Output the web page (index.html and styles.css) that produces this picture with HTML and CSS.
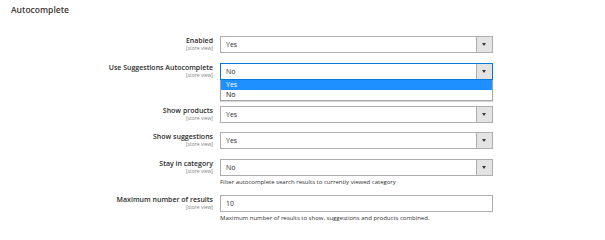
FILE: index.html
```html
<!DOCTYPE html>
<html>
<head>
<meta charset="utf-8">
<link rel="stylesheet" href="styles.css">
</head>
<body>
<div class="page">
  <h2 class="section-title">Autocomplete</h2>
  <div class="form">
    <div class="row">
      <div class="label"><span class="name">Enabled</span><span class="scope">[store view]</span></div>
      <div class="control">
        <div class="select"><span class="value">Yes</span><span class="arrow"></span></div>
      </div>
    </div>
    <div class="row row-open">
      <div class="label"><span class="name">Use Suggestions Autocomplete</span><span class="scope">[store view]</span></div>
      <div class="control">
        <div class="select focused"><span class="value">No</span><span class="arrow"></span></div>
        <ul class="options">
          <li class="option selected">Yes</li>
          <li class="option">No</li>
        </ul>
      </div>
    </div>
    <div class="row">
      <div class="label"><span class="name">Show products</span><span class="scope">[store view]</span></div>
      <div class="control">
        <div class="select"><span class="value">Yes</span><span class="arrow"></span></div>
      </div>
    </div>
    <div class="row">
      <div class="label"><span class="name">Show suggestions</span><span class="scope">[store view]</span></div>
      <div class="control">
        <div class="select"><span class="value">Yes</span><span class="arrow"></span></div>
      </div>
    </div>
    <div class="row">
      <div class="label"><span class="name">Stay in category</span><span class="scope">[store view]</span></div>
      <div class="control">
        <div class="select"><span class="value">No</span><span class="arrow"></span></div>
        <p class="note">Filter autocomplete search results to currently viewed category</p>
      </div>
    </div>
    <div class="row">
      <div class="label"><span class="name">Maximum number of results</span><span class="scope">[store view]</span></div>
      <div class="control">
        <div class="input"><span class="value">10</span></div>
        <p class="note">Maximum number of results to show, suggestions and products combined.</p>
      </div>
    </div>
  </div>
</div>
</body>
</html>
```

FILE: styles.css
```css
html, body {
  margin: 0;
  padding: 0;
  background: #ffffff;
}

body {
  font-family: "Open Sans", "Liberation Sans", sans-serif;
  color: #303030;
}

.page {
  padding: 4px 11px 0 11px;
}

.section-title {
  margin: 0;
  font-size: 8.5px;
  line-height: 12px;
  font-weight: 600;
  color: #41362f;
}

.form {
  margin-top: 20px;
}

.row {
  display: grid;
  grid-template-columns: 202px 273px;
  column-gap: 7px;
  margin-bottom: 9.5px;
}

.row-open {
  margin-bottom: 5px;
}

.label {
  display: flex;
  flex-direction: column;
  align-items: flex-end;
  text-align: right;
}

.name {
  font-size: 7px;
  line-height: 9px;
  font-weight: 600;
  color: #2b2b2b;
}

.scope {
  font-size: 5px;
  line-height: 6px;
  color: #808080;
}

.control {
  display: flex;
  flex-direction: column;
}

.select,
.input {
  box-sizing: border-box;
  height: 17px;
  border: 1px solid #adadad;
  background: #ffffff;
  display: flex;
  align-items: center;
  justify-content: space-between;
}

.value {
  font-size: 7px;
  line-height: 9px;
  padding-left: 5px;
  color: #303030;
}

.arrow {
  box-sizing: border-box;
  width: 16px;
  height: 100%;
  background: #e3e3e3;
  border-left: 1px solid #adadad;
  position: relative;
}

.arrow::after {
  content: "";
  position: absolute;
  left: 5px;
  top: 6px;
  width: 0;
  height: 0;
  border-left: 2px solid transparent;
  border-right: 2px solid transparent;
  border-top: 3px solid #41362f;
}

.select.focused {
  border-color: #007bdb;
}

.options {
  list-style: none;
  margin: 0;
  padding: 0;
  box-sizing: border-box;
  border: 1px solid #a5a5a5;
  border-top: none;
  background: #ffffff;
  box-shadow: 0 1px 1px rgba(0, 0, 0, 0.15);
}

.option {
  font-size: 7px;
  line-height: 10px;
  height: 10px;
  padding-left: 5px;
  color: #000000;
}

.option.selected {
  background: #1e90ff;
  color: #ffffff;
}

.note {
  margin: 3px 0 0 0;
  font-size: 6px;
  line-height: 7px;
  color: #303030;
}
```
